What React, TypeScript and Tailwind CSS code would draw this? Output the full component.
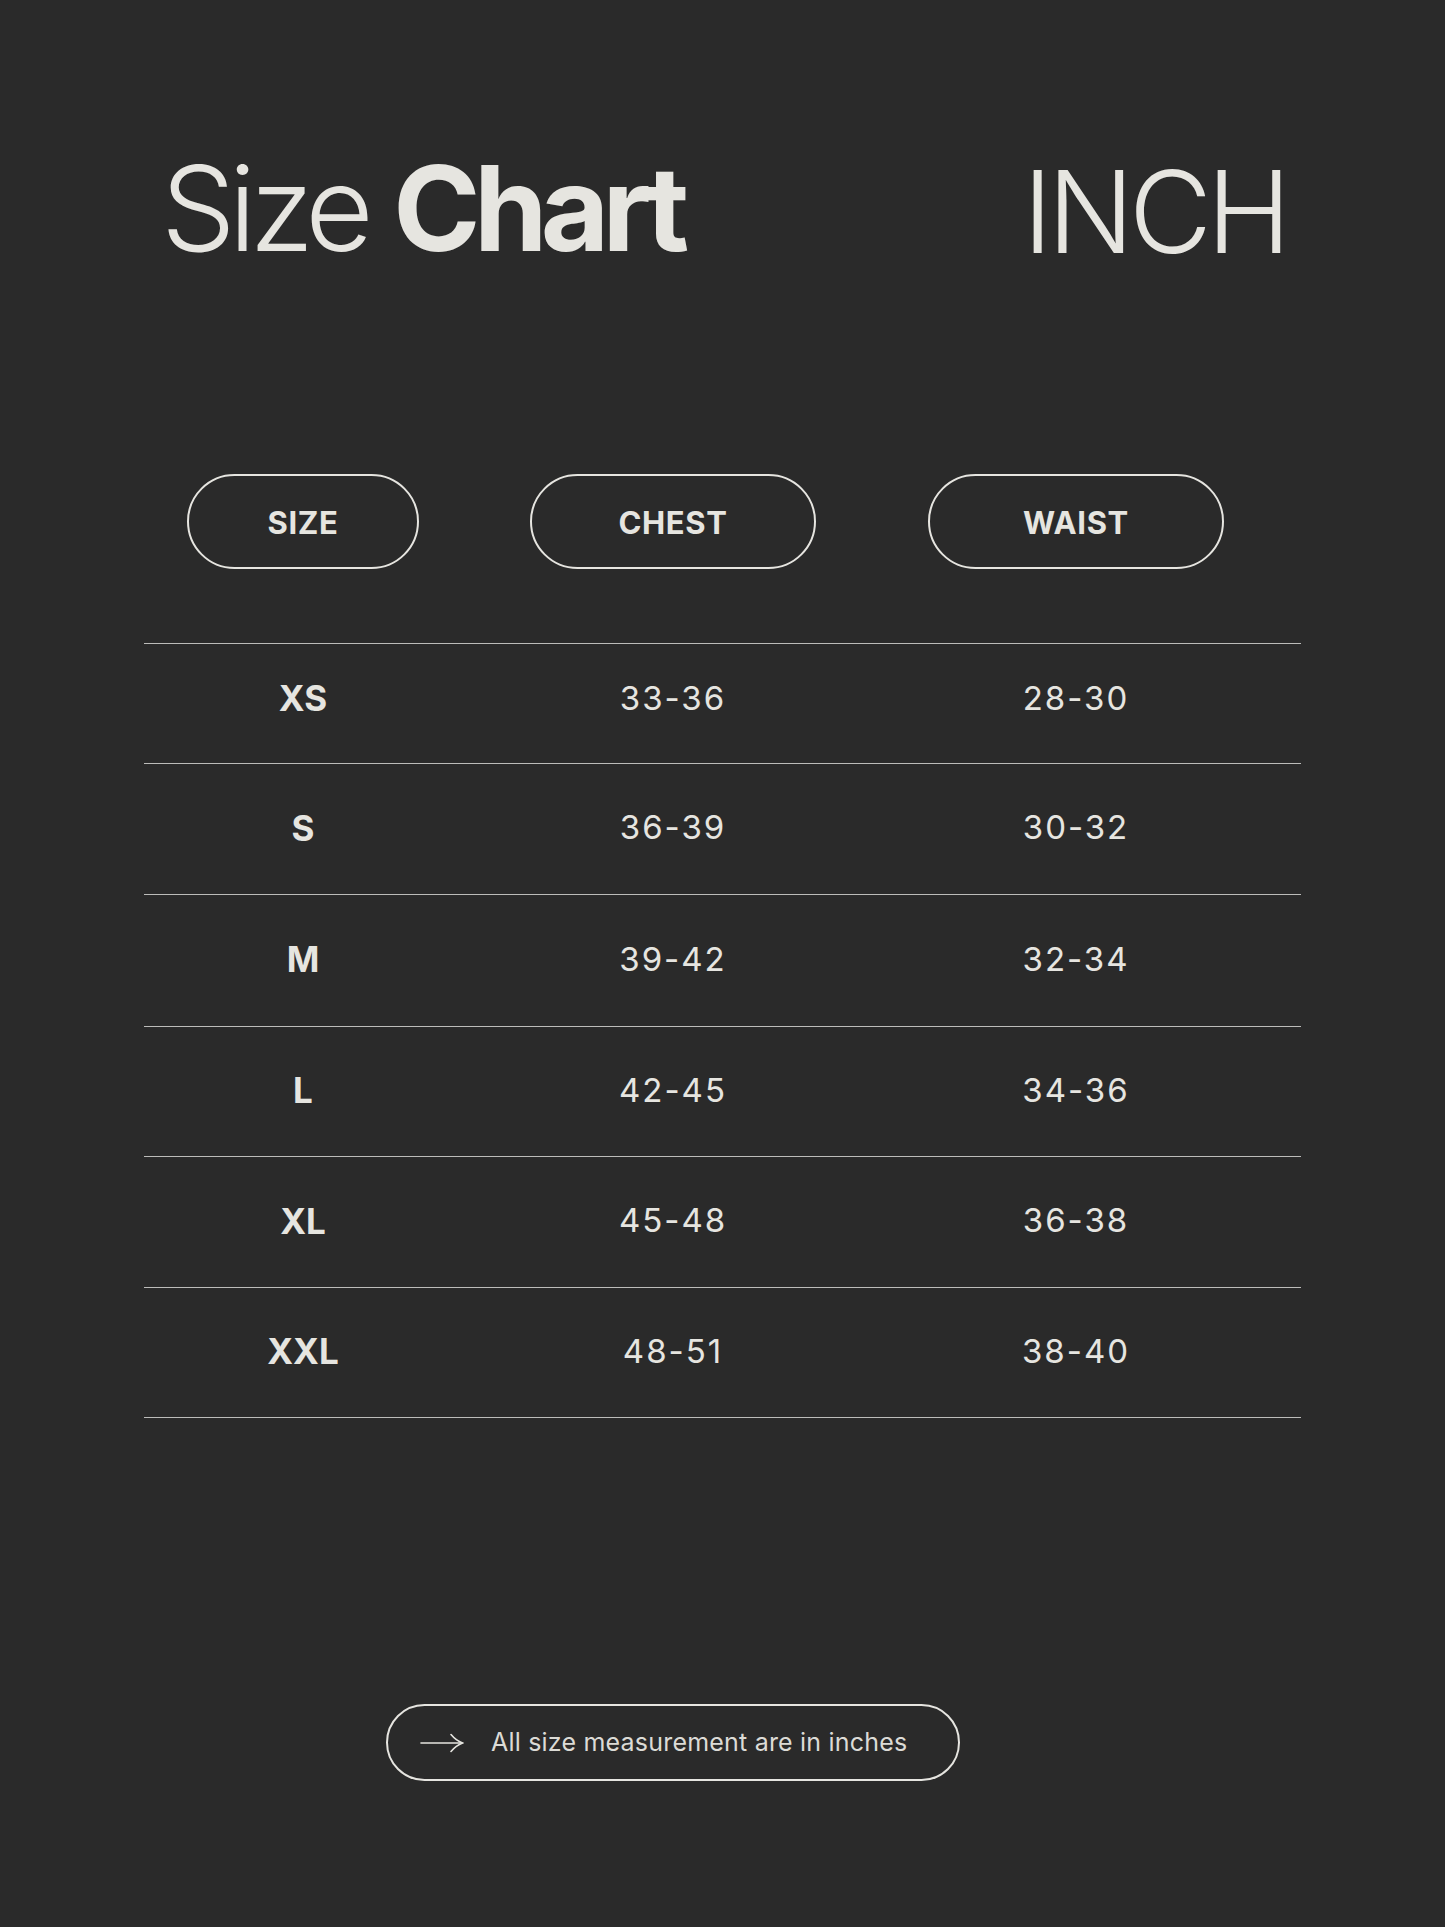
import React from "react";

const rows: { size: string; chest: string; waist: string; h: string }[] = [
  { size: "XS", chest: "33-36", waist: "28-30", h: "h-[120px] pb-[10px]" },
  { size: "S", chest: "36-39", waist: "30-32", h: "h-[131px] pb-[2px]" },
  { size: "M", chest: "39-42", waist: "32-34", h: "h-[132px] pb-[2px]" },
  { size: "L", chest: "42-45", waist: "34-36", h: "h-[130px] pb-[2px]" },
  { size: "XL", chest: "45-48", waist: "36-38", h: "h-[131px] pb-[2px]" },
  { size: "XXL", chest: "48-51", waist: "38-40", h: "h-[130px] pb-[2px]" },
];

export default function App() {
  return (
    <div
      className="w-full min-h-[1927px] bg-[#2a2a2a] text-[#e6e5e0]"
      style={{ fontFamily: "Inter, 'Noto Sans', sans-serif" }}
    >
      {/* Title */}
      <div className="flex justify-between items-start pt-[149px] pl-[161px] pr-[159px]">
        <h1 className="text-[118px] leading-none tracking-[-0.057em]">
          <span className="font-light">Size </span>
          <span className="font-bold">Chart</span>
        </h1>
        <div className="text-[114px] leading-none font-light tracking-[-0.045em] mt-[6px]">INCH</div>
      </div>

      {/* Table */}
      <div className="ml-[144px] w-[1157px] mt-[205px]">
        <div className="grid grid-cols-[318px_422px_384px_1fr] h-[95px]">
          <div className="flex justify-center">
            <div className="w-[232px] h-[95px] pt-[4px] rounded-full border-[2.5px] border-[#e6e5e0] flex items-center justify-center text-[31px] font-bold tracking-[0.02em]">
              SIZE
            </div>
          </div>
          <div className="flex justify-center">
            <div className="w-[286px] h-[95px] pt-[4px] rounded-full border-[2.5px] border-[#e6e5e0] flex items-center justify-center text-[31px] font-bold tracking-[0.02em]">
              CHEST
            </div>
          </div>
          <div className="flex justify-center">
            <div className="w-[296px] h-[95px] pt-[4px] rounded-full border-[2.5px] border-[#e6e5e0] flex items-center justify-center text-[31px] font-bold tracking-[0.02em]">
              WAIST
            </div>
          </div>
          <div />
        </div>

        <div className="mt-[74px] border-b border-[#bcbcba]">
          {rows.map((r) => (
            <div
              key={r.size}
              className={`grid grid-cols-[318px_422px_384px_1fr] items-center border-t border-[#bcbcba] ${r.h}`}
            >
              <div className="text-center text-[35px] font-bold">{r.size}</div>
              <div className="text-center text-[33px] tracking-[0.06em]">{r.chest}</div>
              <div className="text-center text-[33px] tracking-[0.06em]">{r.waist}</div>
              <div />
            </div>
          ))}
        </div>
      </div>

      {/* Footer note */}
      <div className="ml-[386px] mt-[286px] w-[574px] h-[77px] rounded-full border-[2.5px] border-[#e6e5e0] flex items-center pl-[32px]">
        <svg width="44" height="20" viewBox="0 0 44 20" fill="none" className="shrink-0">
          <path d="M1 10 H42" stroke="#e6e5e0" strokeWidth="1.6" strokeLinecap="round" />
          <path d="M31 1.5 Q36 7.5 42.5 10 Q36 12.5 31 18.5" stroke="#e6e5e0" strokeWidth="1.6" strokeLinecap="round" fill="none" />
        </svg>
        <span className="ml-[27px] text-[25px] text-[#dcdbd6] tracking-[0.008em]">All size measurement are in inches</span>
      </div>
    </div>
  );
}
